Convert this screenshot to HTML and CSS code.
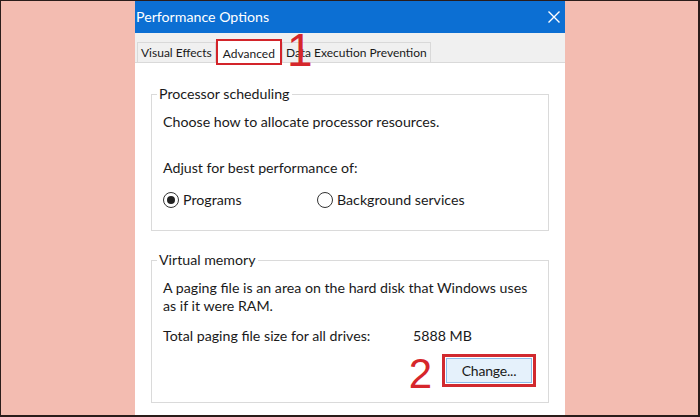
FILE: index.html
```html
<!DOCTYPE html>
<html lang="en">
<head>
<meta charset="utf-8">
<title>Performance Options</title>
<link rel="stylesheet" href="styles.css">
</head>
<body>
<div class="screen">
  <div class="dialog">
    <div class="titlebar">
      <span class="title">Performance Options</span>
      <svg class="close" width="12" height="12" viewBox="0 0 12 12" aria-label="Close">
        <path d="M0.5 0.5 L11.5 11.5 M11.5 0.5 L0.5 11.5" stroke="#fff" stroke-width="1.4" fill="none"/>
      </svg>
    </div>
    <div class="tabstrip">
      <div class="tab">Visual Effects</div>
      <div class="tab active">Advanced</div>
      <div class="tab">Data Execution Prevention</div>
      <span class="step step-1">1</span>
    </div>
    <div class="panel">
      <fieldset class="group group-cpu">
        <legend>Processor scheduling</legend>
        <p class="line">Choose how to allocate processor resources.</p>
        <p class="line line-adjust">Adjust for best performance of:</p>
        <div class="radios">
          <label class="radio-item"><span class="radio checked"></span>Programs</label>
          <label class="radio-item"><span class="radio"></span>Background services</label>
        </div>
      </fieldset>
      <fieldset class="group group-vm">
        <legend>Virtual memory</legend>
        <p class="para">A paging file is an area on the hard disk that Windows uses<br>as if it were RAM.</p>
        <div class="total">
          <span>Total paging file size for all drives:</span>
          <span>5888 MB</span>
        </div>
        <div class="actions">
          <span class="step step-2">2</span>
          <span class="btn-mark"><span class="btn">Change...</span></span>
        </div>
      </fieldset>
    </div>
  </div>
</div>
</body>
</html>
```
FILE: styles.css
```css
* {
  box-sizing: border-box;
  margin: 0;
  padding: 0;
}

html,
body {
  width: 700px;
  height: 417px;
  overflow: hidden;
}

body {
  font-family: "Lato", "Open Sans", sans-serif;
  color: #1a1a1a;
}

.screen {
  width: 700px;
  height: 417px;
  background: #f3bcb1;
  border: solid #2a1c1a;
  border-width: 1px 2px 2px 1px;
  padding-left: 134px;
  display: flex;
}

.dialog {
  width: 430px;
  background: #fff;
  display: flex;
  flex-direction: column;
  overflow: hidden;
}

.titlebar {
  flex-shrink: 0;
  height: 32px;
  background: #0c6fd3;
  color: #fff;
  display: flex;
  align-items: center;
  justify-content: space-between;
  padding: 0 5px 1px 1px;
  font-size: 14.2px;
}

.close {
  display: block;
}

.tabstrip {
  flex-shrink: 0;
  position: relative;
  height: 30px;
  background: #f0f0f0;
  border-bottom: 1px solid #d9d9d9;
  display: flex;
  align-items: flex-end;
  padding-left: 2px;
}

.tab {
  height: 20px;
  padding: 0 3px;
  font-size: 12px;
  line-height: 19px;
  border: 1px solid #d9d9d9;
  border-bottom: none;
  background: #f0f0f0;
  white-space: nowrap;
}

.tab.active {
  height: 26px;
  margin-bottom: -3px;
  padding: 3px 5px 0;
  background: #fff;
  border: 2px solid #d3242a;
  position: relative;
  z-index: 1;
}

.step {
  font-family: "Liberation Sans", Arial, sans-serif;
  color: #d6262b;
}

.step-1 {
  position: absolute;
  left: 152px;
  top: -6px;
  font-size: 46px;
  line-height: 46px;
  z-index: 2;
}

.panel {
  flex: 1;
  min-height: 0;
  padding: 21px 16px 0;
}

.group {
  border: 1px solid #dadada;
  padding: 8px 12px 20px 11px;
  font-size: 14.2px;
  white-space: nowrap;
}

.group legend {
  padding: 0 2px;
  margin-left: -6px;
  line-height: 20px;
}

.line {
  line-height: 20px;
}

.line-adjust {
  margin-top: 26px;
}

.radios {
  margin-top: 12px;
  display: grid;
  grid-template-columns: 154px auto;
  line-height: 20px;
}

.radio-item {
  display: flex;
  align-items: center;
  gap: 4px;
}

.radio {
  width: 16px;
  height: 16px;
  border: 1px solid #333;
  border-radius: 50%;
  display: flex;
  align-items: center;
  justify-content: center;
}

.radio.checked::after {
  content: "";
  width: 8px;
  height: 8px;
  border-radius: 50%;
  background: #222;
}

.group-vm {
  margin-top: 19px;
  padding-top: 9px;
  padding-bottom: 15px;
}

.para {
  line-height: 18px;
}

.total {
  margin-top: 12px;
  line-height: 18px;
  display: grid;
  grid-template-columns: 250px auto;
}

.actions {
  margin-top: 9px;
  display: flex;
  justify-content: flex-end;
  align-items: flex-start;
  gap: 10px;
}

.step-2 {
  height: 33px;
  font-size: 42px;
  line-height: 39px;
}

.btn-mark {
  width: 94px;
  height: 33px;
  border: 3px solid #d12a2f;
  padding: 1px;
  background: #fff;
  display: flex;
}

.btn {
  flex: 1;
  border: 1px solid #8cbcea;
  background: #e5f1fb;
  display: flex;
  align-items: center;
  justify-content: center;
  font-size: 14px;
  letter-spacing: -0.2px;
}
```
